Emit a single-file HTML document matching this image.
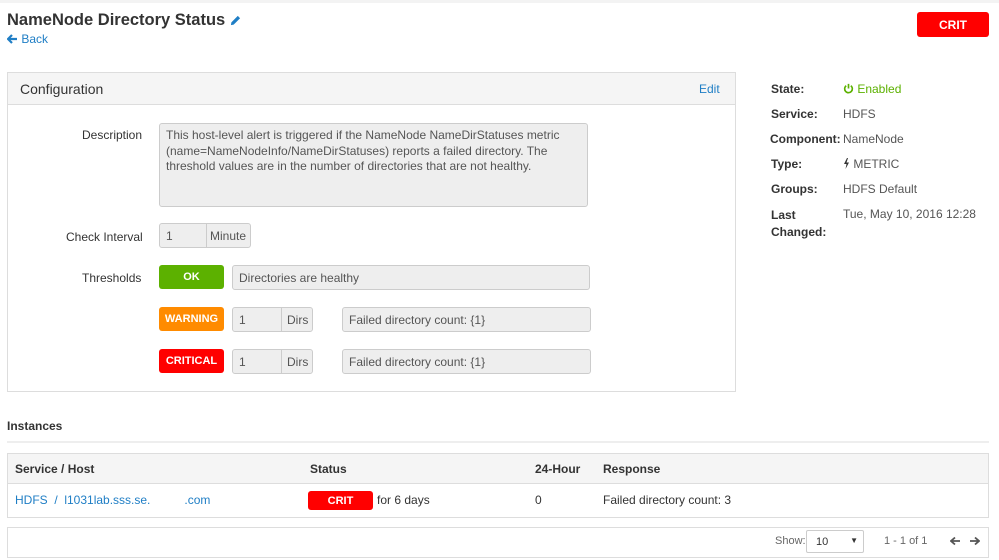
<!DOCTYPE html>
<html><head><meta charset="utf-8"><style>
*{box-sizing:border-box;margin:0;padding:0}
body{width:999px;height:560px;background:#fff;font-family:"Liberation Sans",Arial,sans-serif;font-size:12px;color:#333;position:relative;overflow:hidden}
.a{position:absolute;white-space:nowrap}
.inp{position:absolute;background:#eee;border:1px solid #ccc;border-radius:3px;color:#555;padding:0 6px;display:flex;align-items:center;font-size:12px;white-space:nowrap}
.lab{position:absolute;color:#fff;font-weight:bold;font-size:11px;border-radius:3px;display:flex;align-items:center;justify-content:center}
.rl{position:absolute;left:771px;font-weight:bold;color:#333}
.rv{position:absolute;left:843px;color:#555;white-space:nowrap}
</style></head><body>
<div class="a" style="left:0;top:0;width:999px;height:3px;background:#f3f3f3"></div>
<div class="a" style="left:7px;top:11px;font-size:16.5px;font-weight:bold;color:#333">NameNode Directory Status <svg width="11" height="11" viewBox="0 0 12 12" style="vertical-align:-1px"><path d="M1 11 L1.5 8 L8.5 1 L11 3.5 L4 10.5 Z" fill="#1f7ec5"/></svg></div>
<div class="a" style="left:7px;top:32px;font-size:12px;color:#1f7ec5"><svg width="11" height="10" viewBox="0 0 11 10" style="vertical-align:-1px"><path d="M1 5 H10 M5 1 L1 5 L5 9" stroke="#1f7ec5" stroke-width="2.2" fill="none"/></svg> Back</div>
<div class="lab" style="left:917px;top:12px;width:72px;height:25px;background:#f00;font-size:12px">CRIT</div>

<div class="a" style="left:7px;top:72px;width:729px;height:320px;border:1px solid #ddd"></div>
<div class="a" style="left:8px;top:73px;width:727px;height:32px;background:#f5f5f5;border-bottom:1px solid #ddd"></div>
<div class="a" style="left:20px;top:81px;font-size:14px;color:#333">Configuration</div>
<div class="a" style="left:699px;top:82px;color:#1f7ec5">Edit</div>

<div class="a" style="left:82px;top:128px;color:#333">Description</div>
<div class="inp" style="left:159px;top:123px;width:429px;height:84px;align-items:flex-start;padding:4px 6px;line-height:15.5px;white-space:normal">This host-level alert is triggered if the NameNode NameDirStatuses metric (name=NameNodeInfo/NameDirStatuses) reports a failed directory. The threshold values are in the number of directories that are not healthy.</div>

<div class="a" style="left:66px;top:230px">Check Interval</div>
<div class="inp" style="left:159px;top:223px;width:48px;height:25px;border-radius:3px 0 0 3px">1</div>
<div class="inp" style="left:206px;top:223px;width:45px;height:25px;border-radius:0 3px 3px 0;padding:0 3px">Minute</div>

<div class="a" style="left:82px;top:271px">Thresholds</div>
<div class="lab" style="left:159px;top:265px;width:65px;height:24px;background:#5cb100">OK</div>
<div class="inp" style="left:232px;top:265px;width:358px;height:25px">Directories are healthy</div>

<div class="lab" style="left:159px;top:307px;width:65px;height:24px;background:#ff8b00">WARNING</div>
<div class="inp" style="left:232px;top:307px;width:50px;height:25px;border-radius:3px 0 0 3px">1</div>
<div class="inp" style="left:281px;top:307px;width:32px;height:25px;border-radius:0 3px 3px 0;padding:0 5px">Dirs</div>
<div class="inp" style="left:342px;top:307px;width:249px;height:25px">Failed directory count: {1}</div>

<div class="lab" style="left:159px;top:349px;width:65px;height:24px;background:#f00">CRITICAL</div>
<div class="inp" style="left:232px;top:349px;width:50px;height:25px;border-radius:3px 0 0 3px">1</div>
<div class="inp" style="left:281px;top:349px;width:32px;height:25px;border-radius:0 3px 3px 0;padding:0 5px">Dirs</div>
<div class="inp" style="left:342px;top:349px;width:249px;height:25px">Failed directory count: {1}</div>

<div class="rl" style="top:82px">State:</div><div class="rv" style="top:82px;color:#5cb100"><svg width="11" height="11" viewBox="0 0 12 12" style="vertical-align:-1px"><path d="M3.5 3 A4.2 4.2 0 1 0 8.5 3 M6 1 V6" stroke="#5cb100" stroke-width="1.8" fill="none"/></svg> Enabled</div>
<div class="rl" style="top:107px">Service:</div><div class="rv" style="top:107px">HDFS</div>
<div class="rl" style="top:132px;left:770px">Component:</div><div class="rv" style="top:132px">NameNode</div>
<div class="rl" style="top:157px">Type:</div><div class="rv" style="top:157px"><svg width="7" height="11" viewBox="0 0 7 11" style="vertical-align:-1px"><path d="M4 0 L1 6 H3.5 L2.5 11 L6 4.5 H3.5 L5 0Z" fill="#333"/></svg> METRIC</div>
<div class="rl" style="top:182px">Groups:</div><div class="rv" style="top:182px">HDFS Default</div>
<div class="rl" style="top:207px;line-height:17px">Last<br>Changed:</div><div class="rv" style="top:207px">Tue, May 10, 2016 12:28</div>

<div class="a" style="left:7px;top:419px;font-weight:bold">Instances</div>
<div class="a" style="left:7px;top:441px;width:982px;height:2px;background:#eee"></div>

<div class="a" style="left:7px;top:453px;width:982px;height:65px;border:1px solid #ddd"></div>
<div class="a" style="left:8px;top:454px;width:980px;height:30px;background:#f5f5f5;border-bottom:1px solid #ddd"></div>
<div class="a" style="left:15px;top:462px;font-weight:bold">Service / Host</div>
<div class="a" style="left:310px;top:462px;font-weight:bold">Status</div>
<div class="a" style="left:535px;top:462px;font-weight:bold">24-Hour</div>
<div class="a" style="left:603px;top:462px;font-weight:bold">Response</div>
<div class="a" style="left:15px;top:493px;color:#1f7ec5">HDFS &nbsp;/ &nbsp;l1031lab.sss.se.<span style="margin-left:34px">.com</span></div>
<div class="lab" style="left:308px;top:491px;width:65px;height:19px;background:#f00">CRIT</div>
<div class="a" style="left:377px;top:493px">for 6 days</div>
<div class="a" style="left:535px;top:493px">0</div>
<div class="a" style="left:603px;top:493px">Failed directory count: 3</div>

<div class="a" style="left:7px;top:527px;width:982px;height:31px;border:1px solid #ddd"></div>
<div class="a" style="left:775px;top:535px;font-size:11px;color:#666">Show:</div>
<div class="a" style="left:806px;top:530px;width:58px;height:23px;border:1px solid #ccc;border-radius:2px;padding:5px 9px;font-size:11px">10<span style="position:absolute;right:5px;top:5px;font-size:8px">▼</span></div>
<div class="a" style="left:884px;top:535px;font-size:11px;color:#666">1 - 1 of 1</div>
<svg class="a" style="left:950px;top:536px" width="30" height="10" viewBox="0 0 30 10"><path d="M1 5 H10 M5 1.5 L1 5 L5 8.5 M20 5 H29 M25 1.5 L29 5 L25 8.5" stroke="#555" stroke-width="1.8" fill="none"/></svg>
</body></html>
